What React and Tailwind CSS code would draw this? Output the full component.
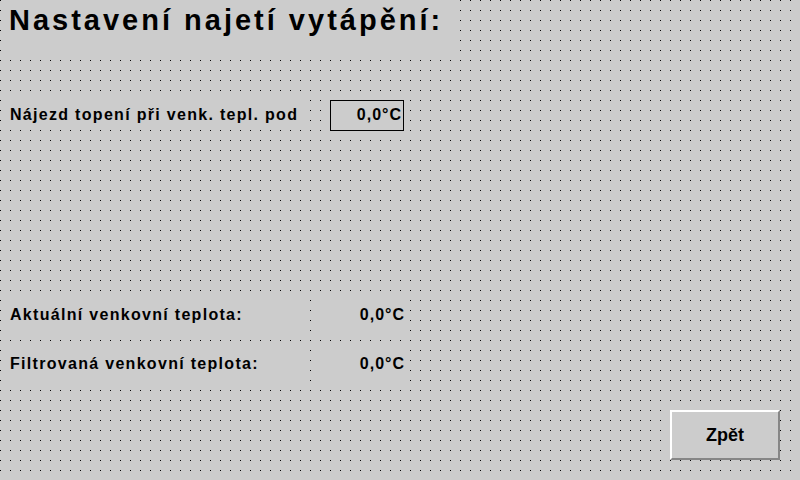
import React from 'react';

const dotGrid =
  "bg-[#cccccc] bg-[linear-gradient(to_right,transparent_1px,#cccccc_1px),linear-gradient(to_bottom,#000000_1px,transparent_1px)] bg-size-[10px_10px]";

const InfoRow = ({ label, value, className = '' }) => (
  <div className={`flex ${className}`}>
    <div className="ml-[5px] w-[300px] h-[35px] bg-[#cccccc] pl-[5px] pt-[7px] text-[16px] leading-[16px] tracking-[1.3px]">{label}</div>
    <div className="ml-[10px] w-[90px] h-[35px] bg-[#cccccc] pt-[7px] text-right text-[16px] leading-[16px] tracking-[1px]">{value}</div>
  </div>
);

export default function App() {
  return (
    <div className={`w-[800px] h-[480px] ${dotGrid} flex flex-col font-['Liberation_Sans',Arial,sans-serif] font-bold text-black`}>
      {/* Title */}
      <div className="ml-[5px] w-[450px] h-[55px] bg-[#cccccc] pl-[4px] pt-[8px] text-[29px] leading-[25px] tracking-[3px] whitespace-nowrap">
        Nastavení najetí vytápění:
      </div>

      {/* Setpoint */}
      <div className="flex mt-[40px]">
        <div className="ml-[5px] w-[300px] h-[30px] bg-[#cccccc] pl-[5px] pt-[12px] text-[16px] leading-[16px] tracking-[1.3px] whitespace-nowrap">
          Nájezd topení při venk. tepl. pod
        </div>
        <div className="ml-[25px] mt-[5px] w-[74px] h-[31px] border border-black bg-[#cccccc] pt-[6px] pr-[1px] text-right text-[16px] leading-[16px] tracking-[1px]">
          0,0°C
        </div>
      </div>

      <InfoRow className="mt-[169px]" label="Aktuální venkovní teplota:" value="0,0°C" />
      <InfoRow className="mt-[14px]" label="Filtrovaná venkovní teplota:" value="0,0°C" />

      {/* Back button */}
      <div className="mt-auto mb-[20px] mr-[20px] flex justify-end">
        <button className="w-[110px] h-[50px] border-2 border-t-white border-l-white border-r-[#868686] border-b-[#868686] bg-[#cccccc] text-[18px] leading-[18px] font-bold">
          Zpět
        </button>
      </div>
    </div>
  );
}
